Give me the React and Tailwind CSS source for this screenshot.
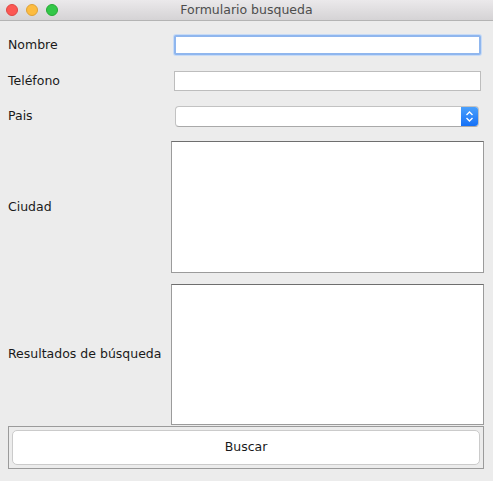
export default function App() {
  return (
    <div className="w-[493px] h-[481px] bg-[#ececec] overflow-hidden text-[#1a1a1a]" style={{ fontFamily: '"DejaVu Sans", "Noto Sans", sans-serif' }}>
      {/* title bar */}
      <div className="relative h-[21px] bg-gradient-to-b from-[#ebe9eb] to-[#d5d3d5] border-b border-[#b4b4b4] flex items-center justify-center">
        <div className="absolute left-[6px] top-[4px] flex gap-[8px]">
          <span className="w-[12px] h-[12px] rounded-full bg-[#fc5753] border border-[#df4744]" />
          <span className="w-[12px] h-[12px] rounded-full bg-[#fdbc40] border border-[#dea236]" />
          <span className="w-[12px] h-[12px] rounded-full bg-[#33c748] border border-[#27aa35]" />
        </div>
        <span className="text-[12.5px] text-[#4d4d4d]">Formulario busqueda</span>
      </div>

      <div className="flex flex-col text-[12.5px]">
        <div className="flex items-center h-[20px] mt-[14px]">
          <span className="w-[174px] pl-[8px]">Nombre</span>
          <div className="w-[307px] h-[20px] bg-white border-2 border-[#8fb6ee] rounded-[2px] shadow-[0_0_0_1px_#c7dbf6]" />
        </div>
        <div className="flex items-center h-[20px] mt-[16px]">
          <span className="w-[174px] pl-[8px]">Teléfono</span>
          <div className="w-[307px] h-[20px] bg-white border border-[#bdbdbd]" />
        </div>
        <div className="flex items-center h-[21px] mt-[15px]">
          <span className="w-[175px] pl-[8px]">Pais</span>
          <div className="w-[304px] h-[21px] flex bg-white border border-[#c2c2c2] border-b-[#a9a9a9] rounded-[4px] overflow-hidden">
            <div className="flex-1" />
            <div className="w-[17px] h-full bg-gradient-to-b from-[#4aa0fc] to-[#1470f6] flex items-center justify-center">
              <svg width="9" height="13" viewBox="0 0 9 13" fill="none" stroke="white" strokeWidth="1.4">
                <path d="M1.5 5 L4.5 2 L7.5 5" />
                <path d="M1.5 8 L4.5 11 L7.5 8" />
              </svg>
            </div>
          </div>
        </div>
        <div className="flex items-center h-[132px] mt-[14px]">
          <span className="w-[171px] pl-[8px]">Ciudad</span>
          <div className="w-[313px] h-full bg-white border border-[#9b9b9b] border-t-[#6e6e6e]" />
        </div>
        <div className="flex items-center h-[141px] mt-[11px]">
          <span className="w-[171px] pl-[8px]">Resultados de búsqueda</span>
          <div className="w-[313px] h-full bg-white border border-[#9b9b9b] border-t-[#6e6e6e]" />
        </div>
        <div className="ml-[8px] mt-[1px] w-[476px] h-[43px] border border-[#9b9b9b] p-[3px]">
          <button className="w-full h-[35px] bg-white border border-[#cbcbcb] rounded-[5px] text-[12.5px] text-[#1a1a1a]">
            Buscar
          </button>
        </div>
      </div>
    </div>
  )
}
